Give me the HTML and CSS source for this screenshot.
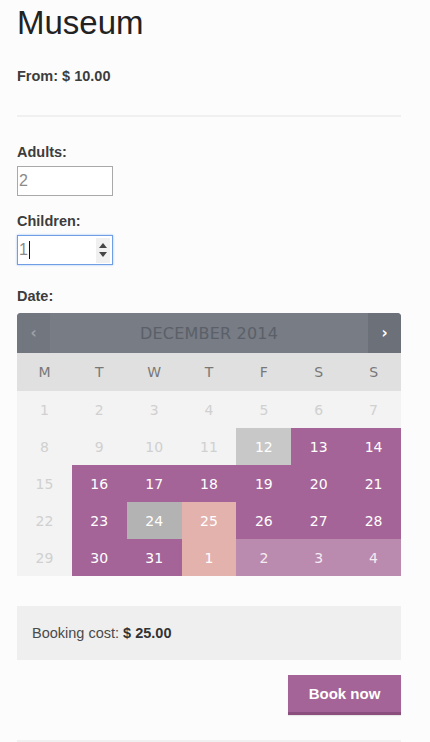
FILE: index.html
```html
<!DOCTYPE html>
<html>
<head>
<meta charset="utf-8">
<link rel="stylesheet" href="styles.css">
</head>
<body>
<div class="page">
  <h1 class="title">Museum</h1>
  <p class="price">From: $ 10.00</p>
  <div class="rule"></div>

  <div class="label label-adults">Adults:</div>
  <div class="field"><span class="val">2</span></div>

  <div class="label label-children">Children:</div>
  <div class="field focus"><span class="val">1</span><span class="caret"></span>
    <span class="spin">
      <svg width="8" height="5" viewBox="0 0 8 5"><path d="M4 0 L8 5 L0 5 Z" fill="#444"/></svg>
      <svg width="8" height="5" viewBox="0 0 8 5"><path d="M0 0 L8 0 L4 5 Z" fill="#444"/></svg>
    </span>
  </div>

  <div class="label label-date">Date:</div>
  <div class="cal">
    <div class="cal-head">
      <span class="nav prev">‹</span>
      <span class="month">DECEMBER 2014</span>
      <span class="nav next">›</span>
    </div>
    <div class="grid">
      <div class="wd">M</div><div class="wd">T</div><div class="wd">W</div><div class="wd">T</div><div class="wd">F</div><div class="wd">S</div><div class="wd">S</div>
      <div class="d off">1</div><div class="d off">2</div><div class="d off">3</div><div class="d off">4</div><div class="d off">5</div><div class="d off">6</div><div class="d off">7</div>
      <div class="d off">8</div><div class="d off">9</div><div class="d off">10</div><div class="d off">11</div><div class="d today">12</div><div class="d av">13</div><div class="d av">14</div>
      <div class="d off">15</div><div class="d av">16</div><div class="d av">17</div><div class="d av">18</div><div class="d av">19</div><div class="d av">20</div><div class="d av">21</div>
      <div class="d off">22</div><div class="d av">23</div><div class="d busy">24</div><div class="d part">25</div><div class="d av">26</div><div class="d av">27</div><div class="d av">28</div>
      <div class="d off">29</div><div class="d av">30</div><div class="d av">31</div><div class="d part">1</div><div class="d next-m">2</div><div class="d next-m">3</div><div class="d next-m">4</div>
    </div>
  </div>

  <div class="cost">Booking cost: <strong>$ 25.00</strong></div>
  <div class="actions"><button class="book">Book now</button></div>
  <div class="rule rule-bottom"></div>
</div>
</body>
</html>
```

FILE: styles.css
```css
html, body {
  margin: 0;
  padding: 0;
  background: #fcfcfc;
}
body {
  font-family: "Liberation Sans", Arial, sans-serif;
  color: #3d3d3d;
}
.page {
  width: 384px;
  padding: 2px 0 0 17px;
}
.title {
  margin: 0;
  font-size: 33px;
  line-height: 42px;
  font-weight: normal;
  color: #222;
}
.price {
  margin: 22px 0 0;
  font-size: 14.5px;
  line-height: 20px;
  font-weight: bold;
  color: #3d3d3d;
}
.rule {
  margin-top: 29px;
  height: 2px;
  width: 384px;
  background: #f0f0f0;
}
.label {
  font-size: 14.5px;
  line-height: 20px;
  font-weight: bold;
  color: #3d3d3d;
}
.label-adults { margin-top: 25px; }
.label-children { margin-top: 15px; }
.label-date { margin-top: 21px; }
.field {
  margin-top: 4px;
  box-sizing: border-box;
  width: 96px;
  height: 30px;
  border: 1px solid #a9a9a9;
  background: #fff;
  display: flex;
  align-items: center;
  padding-left: 1px;
  font-size: 16px;
  color: #8a8a8a;
}
.field.focus {
  border: 1px solid #6f9de6;
  box-shadow: 0 0 2px #9dbdf1;
}
.val { line-height: 20px; }
.caret {
  width: 1px;
  height: 18px;
  background: #111;
  margin-left: 1px;
}
.spin {
  margin-left: auto;
  margin-right: 2px;
  width: 14px;
  height: 25px;
  background: #f0f0f0;
  display: flex;
  flex-direction: column;
  align-items: center;
  justify-content: center;
  gap: 4px;
}
.spin svg { display: block; }
.cal {
  margin-top: 7px;
  width: 384px;
  font-family: "DejaVu Sans", Verdana, sans-serif;
}
.cal-head {
  height: 40px;
  background: #777c85;
  border-radius: 4px 4px 0 0;
  display: flex;
  align-items: center;
  overflow: hidden;
}
.nav {
  width: 33px;
  height: 40px;
  display: flex;
  align-items: center;
  justify-content: center;
  font-size: 15px;
  font-weight: bold;
}
.prev { background: #72777f; color: #9da1a8; }
.next { background: #6b7079; color: #fff; }
.month {
  flex: 1;
  text-align: center;
  font-size: 16px;
  color: #5b6068;
  letter-spacing: 0.2px;
}
.grid {
  display: grid;
  grid-template-columns: repeat(7, 1fr);
  grid-template-rows: 38px;
  grid-auto-rows: 37px;
  background: #f3f3f3;
}
.wd, .d {
  display: flex;
  align-items: center;
  justify-content: center;
  font-size: 14px;
}
.wd {
  background: #e0e0e0;
  color: #787878;
}
.d.off { color: #d0d0d0; }
.d.av { background: #a46497; color: #fff; }
.d.today { background: #c8c8c8; color: #fff; }
.d.busy { background: #b3b3b3; color: #fff; }
.d.part { background: #e3b2ad; color: #fff; }
.d.next-m { background: #bb8aaf; color: #f4ecf2; }
.cost {
  margin-top: 30px;
  height: 54px;
  box-sizing: border-box;
  padding: 0 15px;
  background: #efefef;
  display: flex;
  align-items: center;
  font-size: 14.5px;
  color: #4a4a4a;
  white-space: pre;
}
.cost strong { color: #333; }
.actions {
  margin-top: 15px;
  display: flex;
  justify-content: flex-end;
}
.book {
  width: 113px;
  height: 40px;
  border: 0;
  border-bottom: 3px solid #8a4f7d;
  background: #a46497;
  color: #fff;
  font-family: "Liberation Sans", Arial, sans-serif;
  font-size: 15px;
  font-weight: bold;
  padding: 0;
  box-shadow: 0 1px 1px rgba(0,0,0,0.08);
}
.rule-bottom {
  margin-top: 25px;
}
```
